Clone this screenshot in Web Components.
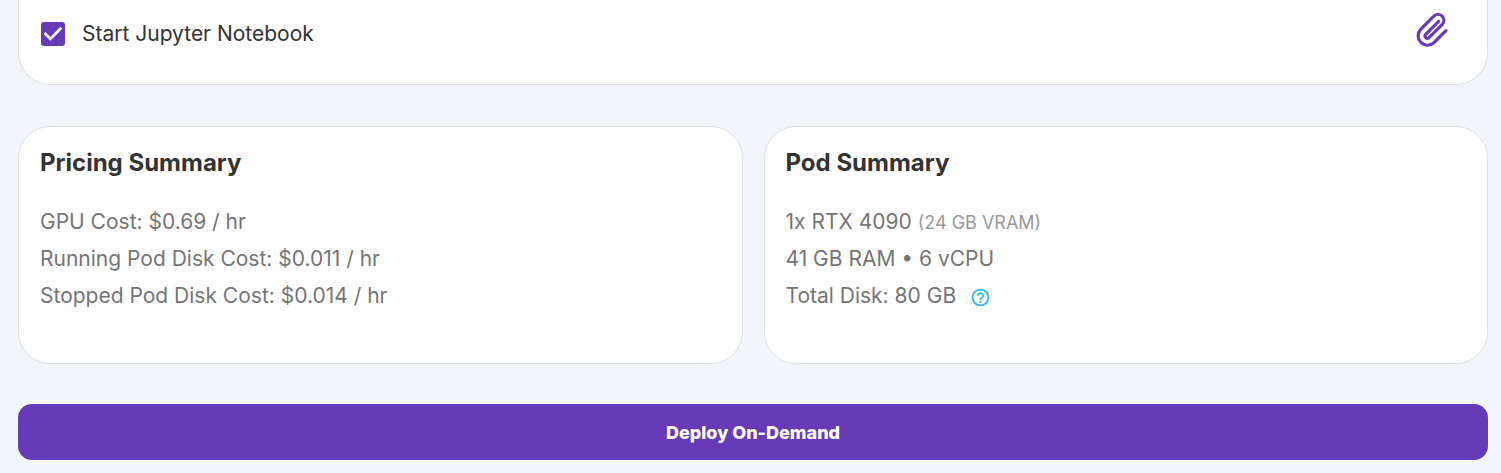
<!DOCTYPE html>
<html lang="en">
<head>
<meta charset="utf-8">
<meta name="viewport" content="width=device-width, initial-scale=1">
<title>Deploy Pod</title>
<style>
  body { margin: 0; background: #f2f5fa; font-family: Inter, sans-serif; color: #333; }
</style>
</head>
<body>
<deploy-page>
  <option-card>
    <check-option>Start Jupyter Notebook</check-option>
    <attach-button></attach-button>
  </option-card>
  <summary-grid>
    <summary-card heading="Pricing Summary">
      <summary-line>GPU Cost: $0.69 / hr</summary-line>
      <summary-line>Running Pod Disk Cost: $0.011 / hr</summary-line>
      <summary-line>Stopped Pod Disk Cost: $0.014 / hr</summary-line>
    </summary-card>
    <summary-card heading="Pod Summary">
      <summary-line>1x RTX 4090 <small slot="note">(24 GB VRAM)</small></summary-line>
      <summary-line>41 GB RAM • 6 vCPU</summary-line>
      <summary-line>Total Disk: 80 GB <help-button slot="note"></help-button></summary-line>
    </summary-card>
  </summary-grid>
  <deploy-button>Deploy On-Demand</deploy-button>
</deploy-page>
<script>
const define = (name, html) => {
  const template = document.createElement('template');
  template.innerHTML = html;
  customElements.define(name, class extends HTMLElement {
    constructor() {
      super();
      this.attachShadow({ mode: 'open' }).append(template.content.cloneNode(true));
    }
    connectedCallback() {
      const heading = this.shadowRoot.querySelector('h2');
      if (heading) heading.textContent = this.getAttribute('heading');
    }
  });
};

define('deploy-page', `
  <style>
    :host { display: block; }
    main { display: flex; flex-direction: column; padding: 0 13px 13px 18px; }
  </style>
  <main><slot></slot></main>`);

define('option-card', `
  <style>
    :host {
      display: flex; justify-content: space-between; align-items: center;
      padding: 12px 37px 36px 22px; background: #fff;
      border: 1px solid #e0e0e0; border-top: 0; border-radius: 0 0 32px 32px;
    }
  </style>
  <slot></slot>`);

define('check-option', `
  <style>
    :host { display: block; margin-top: 8px; }
    label { display: flex; align-items: center; gap: 17px; font-size: 21px; line-height: 28px; }
    .box { display: grid; width: 24px; height: 24px; }
    input, svg { grid-area: 1 / 1; width: 24px; height: 24px; margin: 0; }
    input { appearance: none; background: #fff; border: 2px solid #757575; border-radius: 3px; }
    input:checked { background: #673ab7; border-color: #673ab7; }
    svg { pointer-events: none; }
    input:not(:checked) + svg { visibility: hidden; }
  </style>
  <label>
    <span class="box">
      <input type="checkbox" checked>
      <svg viewBox="3 3 18 18" fill="#fff" aria-hidden="true"><path d="M10 17l-5-5 1.41-1.41L10 14.17l7.59-7.59L19 8z"/></svg>
    </span>
    <span><slot></slot></span>
  </label>`);

define('attach-button', `
  <style>
    :host { display: block; }
    button { display: block; padding: 0; border: 0; background: none; color: #673ab7; cursor: pointer; }
    svg { display: block; width: 34px; height: 36px; }
  </style>
  <button type="button" aria-label="Attach">
    <svg viewBox="78 36 102 108" fill="none" stroke="currentColor" stroke-width="9.5" stroke-linecap="round" stroke-linejoin="round" aria-hidden="true">
      <path d="M168 92L132 128A28.3 28.3 0 0 1 92 88L132 48A17.7 17.7 0 0 1 157 73L117 113A7.1 7.1 0 0 1 107 103L146 64"/>
    </svg>
  </button>`);

define('summary-grid', `
  <style>
    :host { display: grid; grid-template-columns: repeat(2, minmax(0, 1fr)); gap: 21px; margin: 41px 0 40px; }
  </style>
  <slot></slot>`);

define('summary-card', `
  <style>
    :host {
      display: block; padding: 20px 21px 49px; background: #fff;
      border: 1px solid #e0e0e0; border-radius: 32px;
    }
    h2 { margin: 0 0 24px; font-size: 24px; line-height: 32px; font-weight: 700; }
  </style>
  <h2></h2>
  <slot></slot>`);

define('summary-line', `
  <style>
    :host { display: block; color: #757575; font-size: 21px; line-height: 37px; }
    p { margin: 0; }
    ::slotted(small) { font-size: 18px; line-height: 24px; color: #999; }
    ::slotted(help-button) { margin-left: 8px; }
  </style>
  <p><slot></slot><slot name="note"></slot></p>`);

define('help-button', `
  <style>
    :host { display: inline-block; vertical-align: middle; }
    button { display: block; padding: 0; border: 0; background: none; color: #29b6f6; cursor: pointer; }
    svg { display: block; width: 21px; height: 21px; }
  </style>
  <button type="button" aria-label="Disk help">
    <svg viewBox="0 0 24 24" fill="currentColor" aria-hidden="true"><path d="M11 18h2v-2h-2v2zm1-16C6.48 2 2 6.48 2 12s4.48 10 10 10 10-4.48 10-10S17.52 2 12 2zm0 18c-4.41 0-8-3.59-8-8s3.59-8 8-8 8 3.59 8 8-3.59 8-8 8zm0-14c-2.21 0-4 1.79-4 4h2c0-1.1.9-2 2-2s2 .9 2 2c0 2-3 1.75-3 5h2c0-2.25 3-2.5 3-5 0-2.21-1.79-4-4-4z"/></svg>
  </button>`);

define('deploy-button', `
  <style>
    :host { display: block; }
    button {
      display: block; width: 100%; padding: 17px 16px 15px; border: 0; border-radius: 14px;
      background: #673ab7; color: #fff; cursor: pointer;
      font: 800 18px/24px Inter, sans-serif;
    }
  </style>
  <button type="button"><slot></slot></button>`);
</script>
</body>
</html>
